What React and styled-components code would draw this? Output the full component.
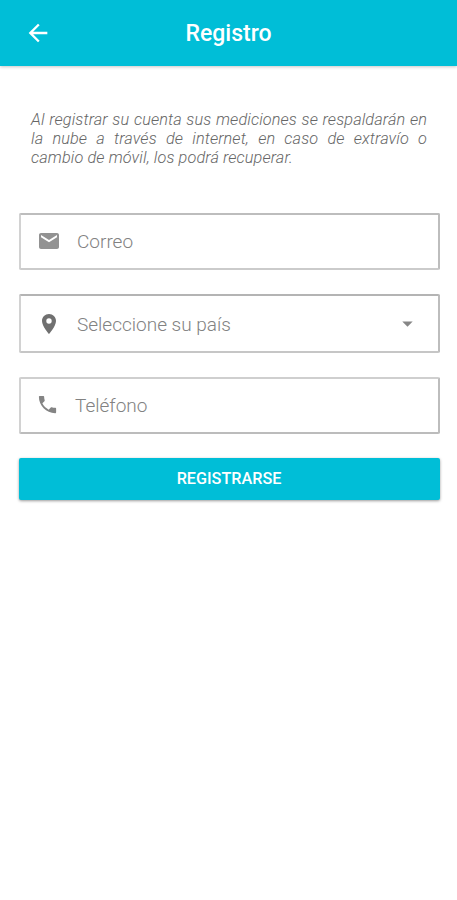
import React from 'react';
import styled, { createGlobalStyle } from 'styled-components';
import { MdArrowBack, MdPhone, MdArrowDropDown } from 'react-icons/md';

const Global = createGlobalStyle`
  * { box-sizing: border-box; }
  body { margin: 0; background: #fff; font-family: Roboto, "Liberation Sans", sans-serif; }
`;
const Screen = styled.main`
  width: 457px; height: 900px; background: #fff; overflow: hidden;
`;
const Header = styled.header`
  height: 66px; background: #00bed7; color: #fff; padding-bottom: 1px;
  display: grid; grid-template-columns: 76px 1fr 76px; align-items: center;
  box-shadow: 0 1px 3px rgba(0,0,0,.22);
`;
const BackButton = styled.button`
  border: 0; background: none; color: inherit; padding: 0;
  display: flex; justify-content: center; font-size: 28px;
`;
const Title = styled.h1`
  margin: 0; padding-top: 2px; text-align: center;
  font-size: 23px; font-weight: 500; line-height: 30px;
`;
const Notice = styled.p`
  margin: 44px 30px 0 31px; height: 57px; color: #666;
  font-size: 16.3px; font-style: italic; font-weight: 300; line-height: 19px;
  letter-spacing: .11px;
`;
const Line = styled.span`
  display: block; white-space: nowrap;
  text-align: ${(p) => (p.$last ? 'left' : 'justify')};
  text-align-last: ${(p) => (p.$last ? 'left' : 'justify')};
`;
const Form = styled.form`
  margin: 46px 17px 0 19px; display: flex; flex-direction: column;
`;
const Field = styled.label`
  height: ${(p) => p.$height}px; margin-bottom: ${(p) => p.$gap}px;
  border: 2px solid; border-radius: 2px;
  border-color: ${(p) => p.$top} #bdbdbd ${(p) => p.$bottom} #d2d2d2;
  display: flex; align-items: center; padding: 0 18px 0 16px;
  color: #828282; font-size: 19px; font-weight: 300;
`;
const Icon = styled.span`
  display: flex; width: ${(p) => p.$width}px; padding-bottom: ${(p) => p.$lift}px;
  color: ${(p) => p.$tone}; font-size: 24px;
`;
const PhoneIcon = styled(MdPhone)`
  margin-left: -1px;
`;
const Caption = styled.span`
  flex: 1; padding-top: ${(p) => p.$drop || 0}px;
`;
const Arrow = styled.span`
  display: flex; font-size: 25px; color: #868686;
`;
const Submit = styled.button`
  height: 42px; border: 0; border-radius: 2px; padding: 0 1px 2px 0;
  background: #00bed7; color: #fff; font: 500 16.2px Roboto, sans-serif;
  box-shadow: 0 1px 3px rgba(0,0,0,.4);
`;

const EmailIcon = () => (
  <svg width="24" height="24" viewBox="0 0 24 24" fill="currentColor">
    <path d="M20 4H4c-1.1 0-2 .9-2 2v12c0 1.1.9 2 2 2h16c1.1 0 2-.9 2-2V6c0-1.1-.9-2-2-2zm0 4.3-8 5-8-5V6l8 5 8-5v2.3z" />
  </svg>
);
const PinIcon = () => (
  <svg width="24" height="24" viewBox="0 0 24 24" fill="currentColor">
    <path d="M12 2C8.13 2 5 5.13 5 9c0 5.25 7 13 7 13s7-7.75 7-13c0-3.87-3.13-7-7-7zm0 9.7a2.7 2.7 0 1 1 0-5.4 2.7 2.7 0 0 1 0 5.4z" />
  </svg>
);

export default function App() {
  return (
    <Screen>
      <Global />
      <Header>
        <BackButton type="button" aria-label="Volver"><MdArrowBack /></BackButton>
        <Title>Registro</Title>
      </Header>
      <Notice>
        <Line>Al registrar su cuenta sus mediciones se respaldarán en</Line>
        <Line>la nube a través de internet, en caso de extravío o</Line>
        <Line $last>cambio de móvil, los podrá recuperar.</Line>
      </Notice>
      <Form>
        <Field $height={57} $gap={24} $top="#bdbdbd" $bottom="#cbcbcb">
          <Icon $width={40} $lift={2} $tone="#929292"><EmailIcon /></Icon><Caption>Correo</Caption>
        </Field>
        <Field $height={59} $gap={24} $top="#b4b4b4" $bottom="#c6c6c6">
          <Icon $width={40} $lift={0} $tone="#707070"><PinIcon /></Icon>
          <Caption $drop={1}>Seleccione su país</Caption>
          <Arrow><MdArrowDropDown /></Arrow>
        </Field>
        <Field $height={57} $gap={24} $top="#cfcfcf" $bottom="#bcbcbc">
          <Icon $width={38} $lift={2} $tone="#848484"><PhoneIcon size={23} /></Icon><Caption>Teléfono</Caption>
        </Field>
        <Submit type="button">REGISTRARSE</Submit>
      </Form>
    </Screen>
  );
}
